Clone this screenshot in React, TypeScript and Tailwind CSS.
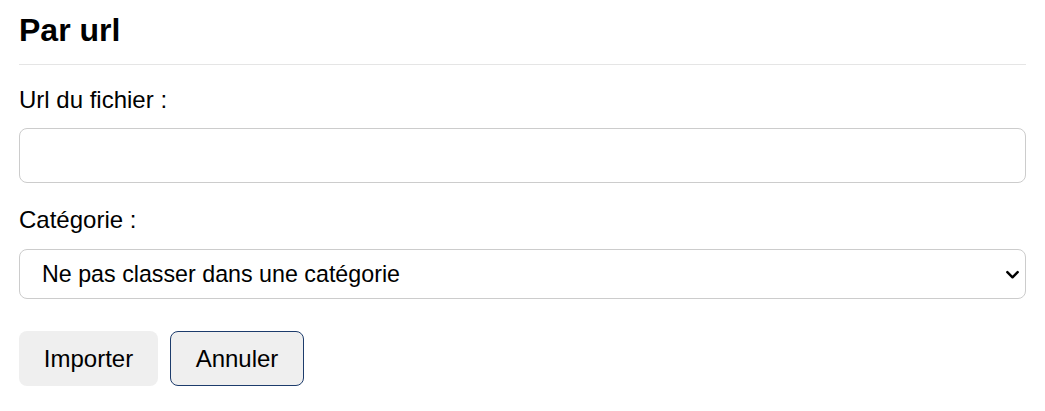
export default function App() {
  return (
    <div className="bg-white px-[19px] pt-[8px] text-black" style={{ fontFamily: '"Liberation Sans", Arial, sans-serif' }}>
      <h2 className="text-[32px] font-bold leading-[44px] pb-[12px] border-b border-[#e5e5e5]">Par url</h2>
      <form className="flex flex-col pt-[20px]">
        <label className="text-[24px] leading-[30px] mb-[13px]">Url du fichier :</label>
        <input
          type="text"
          className="h-[55px] w-full rounded-[8px] border border-[#cccccc] px-[20px] text-[23px] outline-none"
        />
        <label className="text-[24px] leading-[30px] mt-[22px] mb-[14px]">Catégorie :</label>
        <div className="relative">
          <select className="h-[50px] w-full appearance-none rounded-[8px] border border-[#cccccc] bg-white pl-[22px] text-[23.25px] outline-none">
            <option>Ne pas classer dans une catégorie</option>
          </select>
          <svg
            className="pointer-events-none absolute right-[6px] top-[18px] h-[15px] w-[15px]"
            viewBox="0 0 16 16"
            fill="none"
            stroke="black"
            strokeWidth="2.6"
          >
            <path d="M2.5 5.5 8 11l5.5-5.5" strokeLinecap="round" strokeLinejoin="round" />
          </svg>
        </div>
        <div className="mt-[32px] flex gap-[12px]">
          <button type="button" className="h-[55px] w-[139px] rounded-[8px] bg-[#efefef] text-[24px]">
            Importer
          </button>
          <button type="button" className="h-[55px] w-[134px] rounded-[8px] border border-[#1d3c6c] bg-[#efefef] text-[24px]">
            Annuler
          </button>
        </div>
      </form>
    </div>
  );
}
